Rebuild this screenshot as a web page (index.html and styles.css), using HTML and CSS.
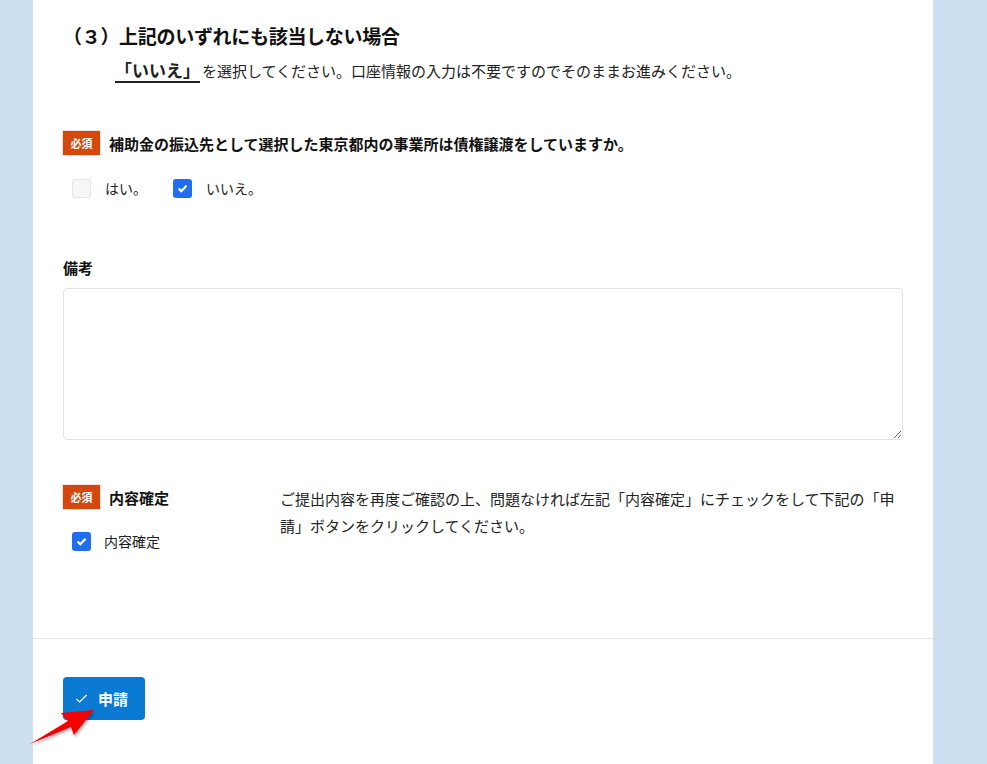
FILE: index.html
```html
<!DOCTYPE html>
<html lang="ja">
<head>
  <meta charset="UTF-8" />
  <meta name="viewport" content="width=device-width, initial-scale=1.0"/>
  <title>申請フォーム</title>
  <link rel="stylesheet" href="styles.css">
</head>
<body>

  <div class="panel">
    <div class="content">
      <h2 class="case-title">（３）上記のいずれにも該当しない場合</h2>
      <p class="case-note"><span class="answer">「いいえ」</span>を選択してください。口座情報の入力は不要ですのでそのままお進みください。</p>

      <div class="field field-question">
        <div class="label-row">
          <span class="badge">必須</span>
          <span class="label-text">補助金の振込先として選択した東京都内の事業所は債権譲渡をしていますか。</span>
        </div>
        <div class="choices">
          <label class="choice"><span class="box"></span>はい。</label>
          <label class="choice"><span class="box checked"></span>いいえ。</label>
        </div>
      </div>

      <div class="field field-notes">
        <div class="plain-label">備考</div>
        <textarea class="notes"></textarea>
      </div>

      <div class="field confirm">
        <div class="confirm-left">
          <div class="label-row">
            <span class="badge">必須</span>
            <span class="label-text">内容確定</span>
          </div>
          <label class="choice confirm-choice"><span class="box checked"></span>内容確定</label>
        </div>
        <p class="confirm-text">ご提出内容を再度ご確認の上、問題なければ左記「内容確定」にチェックをして下記の「申請」ボタンをクリックしてください。</p>
      </div>
    </div>

    <div class="footer">
      <button class="submit-btn" type="button">
        <svg width="13" height="13" viewBox="0 0 14 14"><path d="M1.5 7.5l3.5 3.2L12.5 3.2" fill="none" stroke="#fff" stroke-width="1.3"/></svg>
        申請
      </button>
      <svg class="pointer" width="80" height="50" viewBox="0 0 80 50">
        <defs>
          <filter id="sh" x="-20%" y="-20%" width="140%" height="160%">
            <feDropShadow dx="1" dy="2" stdDeviation="1.5" flood-color="#000" flood-opacity="0.35"/>
          </filter>
        </defs>
        <polygon points="0,45 38,22 31,14 64,11 44,36 41,28" fill="#f40000" filter="url(#sh)"/>
      </svg>
    </div>
  </div>

</body>
</html>
```

FILE: styles.css
```css
body {
  margin: 0;
  background: #cde0f1;
  font-family: "Noto Sans CJK JP", "Noto Sans", sans-serif;
  color: #222;
}

.panel {
  width: 900px;
  margin-left: 33px;
  background: #fff;
  min-height: 100vh;
}

.content {
  padding: 23px 30px 0;
}

.case-title {
  margin: 0;
  font-size: 19px;
  line-height: 26px;
  font-weight: bold;
  letter-spacing: -0.3px;
  color: #111;
}

.case-note {
  margin: 9px 0 0 52px;
  font-size: 15px;
  line-height: 24px;
  color: #222;
}

.answer {
  font-size: 17px;
  font-weight: bold;
  text-decoration: underline;
  text-decoration-thickness: 2px;
  text-underline-offset: 4px;
  margin-right: 2px;
}

.field-question {
  margin-top: 48px;
}

.label-row {
  display: flex;
  align-items: center;
  gap: 9px;
  height: 24px;
}

.badge {
  display: inline-block;
  width: 37px;
  height: 24px;
  line-height: 24px;
  text-align: center;
  background: #d5480d;
  color: #fff;
  font-size: 11px;
  font-weight: bold;
  box-shadow: 0 0 0 1px #f3e2da;
  box-sizing: border-box;
}

.label-text {
  font-size: 15px;
  font-weight: bold;
  color: #111;
}

.choices {
  display: flex;
  gap: 26px;
  margin-top: 23px;
  padding-left: 9px;
}

.choice {
  display: flex;
  align-items: center;
  gap: 14px;
  font-size: 14px;
  color: #222;
}

.box {
  width: 19px;
  height: 19px;
  box-sizing: border-box;
  border: 1px solid #e6e6e6;
  background: #f6f6f6;
  border-radius: 3px;
}

.box.checked {
  border: none;
  background: #1f6ef0 url("data:image/svg+xml,%3Csvg xmlns='http://www.w3.org/2000/svg' viewBox='0 0 19 19'%3E%3Cpath d='M5.6 9.6l2.7 2.6 5.2-5.4' fill='none' stroke='%23fff' stroke-width='2.3'/%3E%3C/svg%3E") no-repeat center / 19px 19px;
}

.field-notes {
  margin-top: 60px;
}

.plain-label {
  font-size: 15px;
  line-height: 20px;
  font-weight: bold;
  color: #111;
}

.notes {
  display: block;
  width: 840px;
  height: 152px;
  margin-top: 10px;
  box-sizing: border-box;
  border: 1px solid #e2e2e2;
  border-radius: 4px;
  resize: vertical;
  font-family: inherit;
}

.confirm {
  display: flex;
  margin-top: 43px;
}

.confirm-left {
  width: 217px;
  flex-shrink: 0;
  padding-top: 2px;
}

.confirm-choice {
  margin-top: 22px;
  padding-left: 9px;
  gap: 13px;
}

.confirm-text {
  margin: 0;
  padding-top: 2px;
  width: 623px;
  font-size: 15px;
  line-height: 27px;
  color: #222;
}

.footer {
  position: relative;
  margin-top: 87px;
  border-top: 1px solid #e5e5e5;
  padding: 38px 30px 44px;
}

.submit-btn {
  display: flex;
  align-items: center;
  gap: 10px;
  width: 82px;
  height: 43px;
  padding: 0 0 0 12px;
  border: none;
  border-radius: 4px;
  background: #0a7ad3;
  color: #fff;
  font-family: inherit;
  font-size: 15px;
  font-weight: bold;
}

.pointer {
  position: absolute;
  left: -3px;
  top: 60px;
}
```
